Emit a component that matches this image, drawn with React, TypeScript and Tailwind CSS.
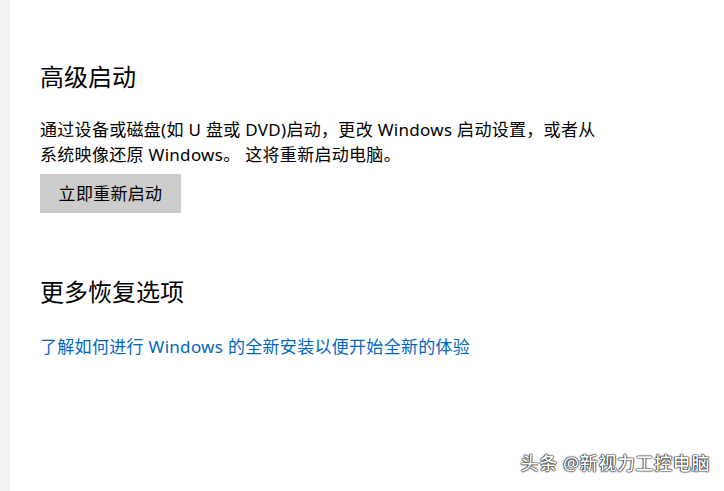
export default function App() {
  const font = {
    fontFamily: '"Noto Sans", "Noto Sans CJK SC", sans-serif',
  };
  return (
    <div className="relative flex h-[491px] w-[724px] overflow-hidden bg-white" style={font}>
      <div className="w-[10px] shrink-0 bg-[#f2f2f2]" />
      <div className="flex flex-col items-start pl-[30px] pt-[61px] text-black">
        <h1 className="text-[24px] leading-[32px] font-normal">高级启动</h1>
        <p className="mt-[24px] w-[600px] text-[17px] leading-[25px] tracking-[0.3px]">
          通过设备或磁盘(如 U 盘或 DVD)启动，更改 Windows 启动设置，或者从
          <br />
          系统映像还原 Windows。 这将重新启动电脑。
        </p>
        <button className="mt-[7px] h-[39px] w-[141px] bg-[#cccccc] text-[17px] leading-[25px] tracking-[0.3px] text-black">
          立即重新启动
        </button>
        <h2 className="mt-[63px] text-[24px] leading-[32px] font-normal">更多恢复选项</h2>
        <a className="mt-[26px] text-[17px] leading-[25px] tracking-[0.3px] text-[#0067c0]">
          了解如何进行 Windows 的全新安装以便开始全新的体验
        </a>
      </div>
      <div className="absolute right-[14px] top-[451px] text-[18px] leading-[24px] tracking-[0.6px] font-medium text-white [text-shadow:0_0_2px_#000,0_0_1px_#000,0_0_1px_#000]">
        头条 @新视力工控电脑
      </div>
    </div>
  );
}
